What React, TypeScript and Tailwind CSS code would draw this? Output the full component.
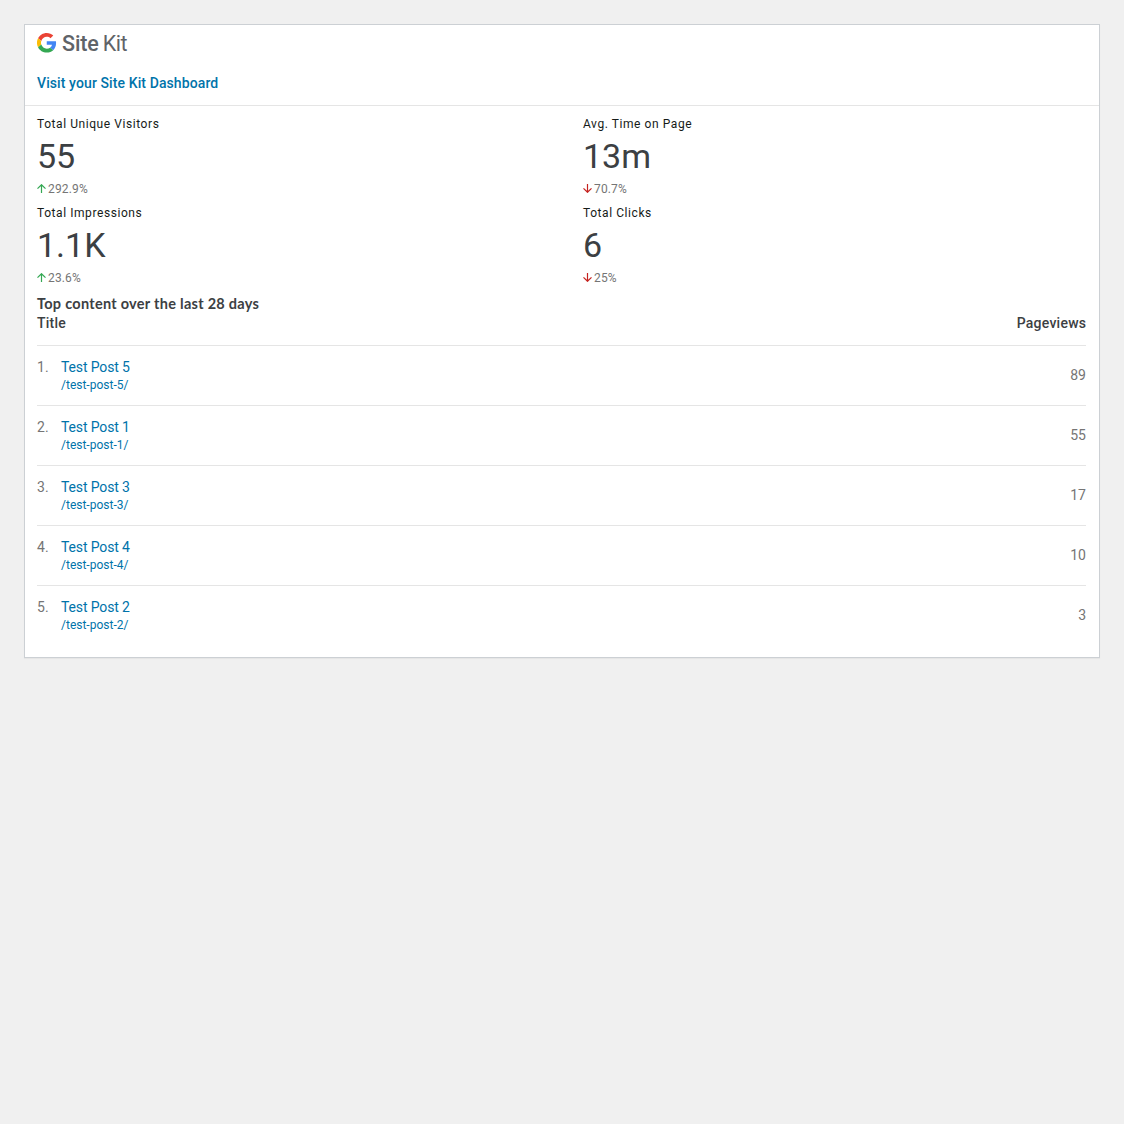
import React from "react";

const up = "M4.5 9V.8M.5 4.6 4.5.7 8.5 4.6";
const down = "M4.5 0v8.2M.5 4.4 4.5 8.3 8.5 4.4";

function Stat({ label, value, change, rise }: { label: string; value: string; change: string; rise?: boolean }) {
  return (
    <div className="h-[89px]">
      <div className="h-4 text-[12px] leading-4 tracking-[0.57px] text-[#161b18]">{label}</div>
      <div className="mt-1 h-10 text-[34px] leading-10 text-[#3c4043]">{value}</div>
      <div className="mt-[5px] flex h-4 items-center text-[12px] leading-4 tracking-[0.15px] text-[#757575]">
        <svg className="mr-[2px] mb-px" width="9" height="9" viewBox="0 0 9 9" fill="none" stroke={rise ? "#34a853" : "#c5221f"} strokeWidth="1.2">
          <path d={rise ? up : down} />
        </svg>
        {change}
      </div>
    </div>
  );
}

const posts = [
  { n: 5, views: 89 },
  { n: 1, views: 55 },
  { n: 3, views: 17 },
  { n: 4, views: 10 },
  { n: 2, views: 3 },
];

export default function App() {
  return (
    <div className="min-h-screen bg-[#f0f0f0] p-6 font-['Roboto',sans-serif]">
      <div className="h-[634px] border border-[#ccd0d4] bg-white shadow-[0_1px_1px_rgba(0,0,0,0.04)]">
        <div className="h-[81px] border-b border-[#e5e5e5] px-3 pt-2">
          <div className="flex h-5 items-start">
            <svg width="19.5" height="19.5" viewBox="0 0 48 48">
              <path fill="#EA4335" d="M24 9.5c3.54 0 6.71 1.22 9.21 3.6l6.85-6.85C35.9 2.38 30.47 0 24 0 14.62 0 6.51 5.38 2.56 13.22l7.98 6.19C12.43 13.72 17.74 9.5 24 9.5z" />
              <path fill="#4285F4" d="M46.98 24.55c0-1.57-.15-3.09-.38-4.55H24v9.02h12.94c-.58 2.96-2.26 5.48-4.78 7.18l7.73 6c4.51-4.18 7.09-10.36 7.09-17.65z" />
              <path fill="#FBBC05" d="M10.53 28.59A14.5 14.5 0 0 1 10.53 19.41l-7.98-6.19a24 24 0 0 0 0 21.56l7.98-6.19z" />
              <path fill="#34A853" d="M24 48c6.48 0 11.93-2.13 15.89-5.81l-7.73-6c-2.15 1.45-4.92 2.3-8.16 2.3-6.26 0-11.57-4.22-13.47-9.91l-7.98 6.19C6.51 42.62 14.62 48 24 48z" />
            </svg>
            <span className="ml-[5.5px] pt-px text-[21.5px] leading-5 font-medium tracking-[-0.1px] text-[#5f6368]">Site</span>
            <span className="ml-[4px] pt-px text-[21.5px] leading-5 tracking-[-0.5px] text-[#5f6368]">Kit</span>
          </div>
          <div className="mt-5 text-[14px] leading-5 font-medium tracking-[0.1px] text-[#0073aa]">Visit your Site Kit Dashboard</div>
        </div>
        <div className="pr-[13px] pl-3 pt-[10px]">
          <div className="grid grid-cols-[546px_1fr]">
            <Stat label="Total Unique Visitors" value="55" change="292.9%" rise />
            <Stat label="Avg. Time on Page" value="13m" change="70.7%" />
            <Stat label="Total Impressions" value="1.1K" change="23.6%" rise />
            <Stat label="Total Clicks" value="6" change="25%" />
          </div>
          <div className="h-[19px] font-['Lato',sans-serif] text-[14.5px] leading-5 font-bold tracking-[0.28px] text-[#3c4043]">Top content over the last 28 days</div>
          <div className="flex h-8 justify-between text-[14px] leading-[21px] font-medium tracking-[0.25px] text-[#3c4043]">
            <span>Title</span>
            <span className="-mr-[0.25px]">Pageviews</span>
          </div>
          {posts.map((p, i) => (
            <div key={p.n} className="flex h-[60px] items-start border-t border-[#e5e5e5] pt-[11px] text-[14px] text-[#757575]">
              <div className="w-6 leading-5">{i + 1}.</div>
              <div className="flex-1 text-[#0073aa]">
                <div className="leading-5 tracking-[-0.13px]">Test Post {p.n}</div>
                <div className="text-[12px] leading-4">/test-post-{p.n}/</div>
              </div>
              <div className="pt-2 leading-5">{p.views}</div>
            </div>
          ))}
        </div>
      </div>
    </div>
  );
}
